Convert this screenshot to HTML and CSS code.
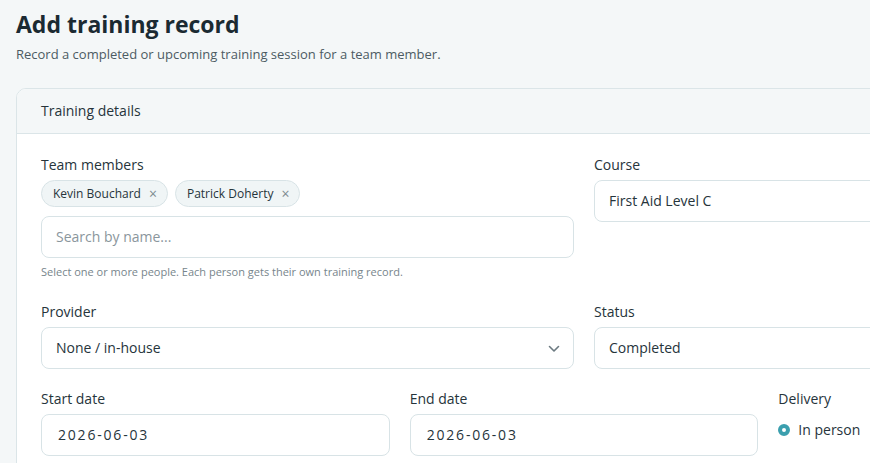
FILE: index.html
```html
<!DOCTYPE html>
<html lang="en">
<head>
  <meta charset="UTF-8" />
  <meta name="viewport" content="width=device-width, initial-scale=1.0" />
  <title>Add training record</title>
  <link rel="stylesheet" href="styles.css">
</head>
<body>
  <div class="page">
    <h1>Add training record</h1>
    <p class="lead">Record a completed or upcoming training session for a team member.</p>

    <div class="card">
      <div class="card-head">Training details</div>
      <div class="card-body">
        <div class="row two first">
          <div class="field">
            <label>Team members</label>
            <div class="chips">
              <span class="chip">Kevin Bouchard <span class="x">×</span></span>
              <span class="chip">Patrick Doherty <span class="x">×</span></span>
            </div>
            <div class="input placeholder">Search by name...</div>
            <div class="help">Select one or more people. Each person gets their own training record.</div>
          </div>
          <div class="field">
            <label>Course</label>
            <div class="input">First Aid Level C</div>
          </div>
        </div>

        <div class="row two">
          <div class="field">
            <label>Provider</label>
            <div class="input select">None / in-house
              <svg class="chev" width="12" height="8" viewBox="0 0 12 8"><path d="M1.5 1.5 6 6l4.5-4.5" fill="none" stroke="#6c7a81" stroke-width="1.6" stroke-linecap="round" stroke-linejoin="round"/></svg>
            </div>
          </div>
          <div class="field">
            <label>Status</label>
            <div class="input">Completed</div>
          </div>
        </div>

        <div class="row three">
          <div class="field">
            <label>Start date</label>
            <div class="input date">2026-06-03</div>
          </div>
          <div class="field">
            <label>End date</label>
            <div class="input date">2026-06-03</div>
          </div>
          <div class="field">
            <label>Delivery</label>
            <div class="radio"><span class="dot"></span>In person</div>
          </div>
        </div>
      </div>
    </div>
  </div>
</body>
</html>
```

FILE: styles.css
```css
html, body { margin: 0; overflow: hidden; }
body { font-family: 'Open Sans', 'Noto Sans', sans-serif; background: #f4f7f8; color: #26343b; }
.page { padding: 8px 16px; width: 1200px; }
h1 { margin: 0; font-size: 23px; font-weight: 700; color: #1b2a32; line-height: 32px; }
.lead { margin: 5px 0 0; font-size: 13px; color: #4c5b63; line-height: 18px; }

.card { margin-top: 25px; width: 1134px; background: #fff; border: 1px solid #dbe5e8; border-radius: 10px; overflow: hidden; }
.card-head { height: 44px; line-height: 44px; padding: 0 24px; background: #f4f7f8; border-bottom: 1px solid #dbe5e8; font-size: 14px; font-weight: 500; color: #26343b; }
.card-body { padding: 23px 24px; }

.row { display: grid; column-gap: 20px; margin-bottom: 22px; }
.row.two { grid-template-columns: 1fr 1fr; }
.row.three { grid-template-columns: 1fr 1fr 1fr; }
.row.first { margin-bottom: 25px; }

label { display: block; font-size: 14px; line-height: 16px; margin-bottom: 7px; color: #26343b; }

.chips { display: flex; gap: 7px; margin-bottom: 9px; }
.chip { display: inline-flex; align-items: center; box-sizing: border-box; height: 27px; padding: 0 10px 0 11px; border: 1px solid #d8e3e6; background: #f0f5f6; border-radius: 14px; font-size: 12px; color: #26343b; }
.chip .x { margin-left: 8px; font-size: 14px; color: #7d8a90; }

.input { position: relative; box-sizing: border-box; height: 42px; line-height: 40px; padding: 0 14px; border: 1px solid #d8e3e6; border-radius: 8px; background: #fff; font-size: 14px; color: #26343b; }
.input.placeholder { color: #8a969c; }
.input.date { padding-left: 16px; letter-spacing: 1.8px; }
.chev { position: absolute; right: 13px; top: 17px; }
.help { margin-top: 7px; font-size: 11px; line-height: 14px; color: #77858c; }

.radio { display: flex; align-items: center; gap: 8px; font-size: 14px; margin-top: 13px; color: #26343b; }
.dot { width: 4px; height: 4px; border-radius: 50%; border: 4px solid #3b9fae; background: #fff; }
```
